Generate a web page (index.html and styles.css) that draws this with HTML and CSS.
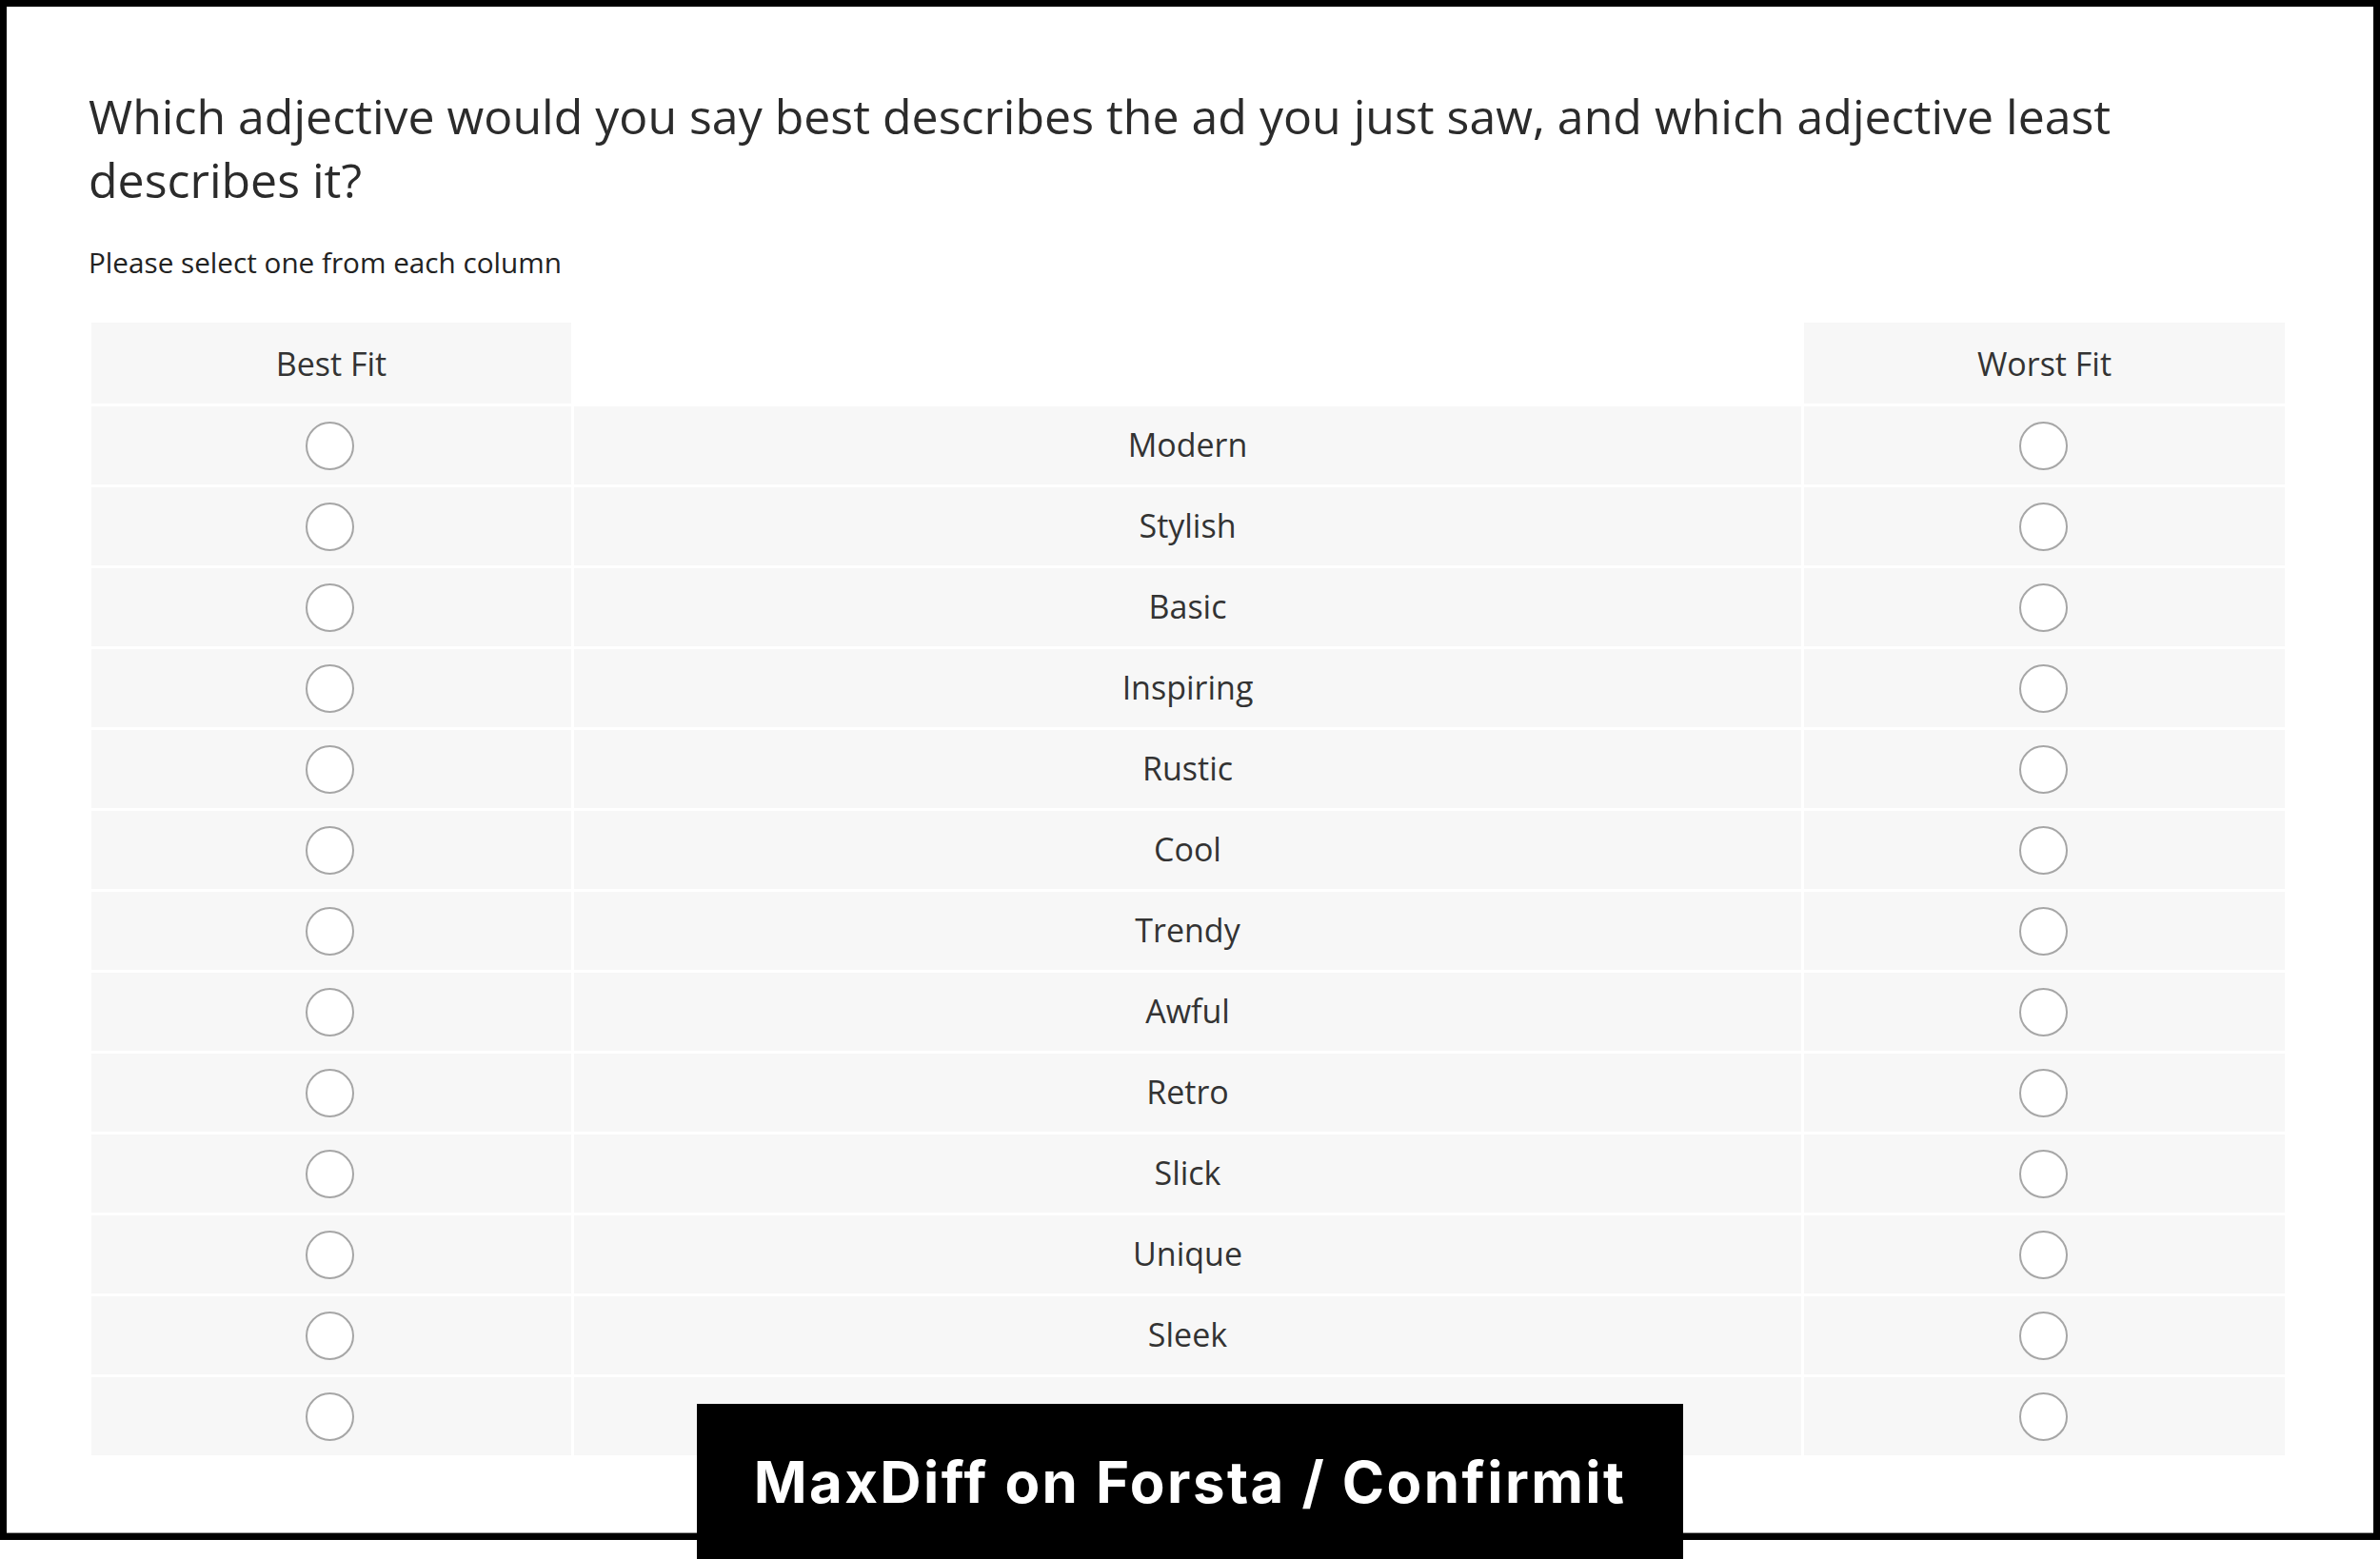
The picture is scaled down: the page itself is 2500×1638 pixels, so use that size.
FILE: index.html
```html
<!DOCTYPE html>
<html lang="en">
<head>
    <meta charset="UTF-8">
    <meta name="viewport" content="width=device-width, initial-scale=1.0">
    <title>MaxDiff on Forsta / Confirmit</title>
    <link rel="stylesheet" href="styles.css">
</head>
<body>

    <!-- Pregunta MaxDiff -->
    <div class="frame">
        <h1 class="question-title">Which adjective would you say best describes the ad you just saw, and which adjective least describes it?</h1>
        <p class="question-hint">Please select one from each column</p>

        <div class="maxdiff">
            <div class="cell head">Best Fit</div>
            <div class="cell head blank"></div>
            <div class="cell head">Worst Fit</div>

            <div class="cell"><input type="radio" name="best" value="1"></div>
            <div class="cell label">Modern</div>
            <div class="cell"><input type="radio" name="worst" value="1"></div>

            <div class="cell"><input type="radio" name="best" value="2"></div>
            <div class="cell label">Stylish</div>
            <div class="cell"><input type="radio" name="worst" value="2"></div>

            <div class="cell"><input type="radio" name="best" value="3"></div>
            <div class="cell label">Basic</div>
            <div class="cell"><input type="radio" name="worst" value="3"></div>

            <div class="cell"><input type="radio" name="best" value="4"></div>
            <div class="cell label">Inspiring</div>
            <div class="cell"><input type="radio" name="worst" value="4"></div>

            <div class="cell"><input type="radio" name="best" value="5"></div>
            <div class="cell label">Rustic</div>
            <div class="cell"><input type="radio" name="worst" value="5"></div>

            <div class="cell"><input type="radio" name="best" value="6"></div>
            <div class="cell label">Cool</div>
            <div class="cell"><input type="radio" name="worst" value="6"></div>

            <div class="cell"><input type="radio" name="best" value="7"></div>
            <div class="cell label">Trendy</div>
            <div class="cell"><input type="radio" name="worst" value="7"></div>

            <div class="cell"><input type="radio" name="best" value="8"></div>
            <div class="cell label">Awful</div>
            <div class="cell"><input type="radio" name="worst" value="8"></div>

            <div class="cell"><input type="radio" name="best" value="9"></div>
            <div class="cell label">Retro</div>
            <div class="cell"><input type="radio" name="worst" value="9"></div>

            <div class="cell"><input type="radio" name="best" value="10"></div>
            <div class="cell label">Slick</div>
            <div class="cell"><input type="radio" name="worst" value="10"></div>

            <div class="cell"><input type="radio" name="best" value="11"></div>
            <div class="cell label">Unique</div>
            <div class="cell"><input type="radio" name="worst" value="11"></div>

            <div class="cell"><input type="radio" name="best" value="12"></div>
            <div class="cell label">Sleek</div>
            <div class="cell"><input type="radio" name="worst" value="12"></div>

            <div class="cell"><input type="radio" name="best" value="13"></div>
            <div class="cell label">Artistic</div>
            <div class="cell"><input type="radio" name="worst" value="13"></div>
        </div>
    </div>

    <!-- Rótulo -->
    <div class="caption">MaxDiff on Forsta / Confirmit</div>

</body>
</html>
```

FILE: styles.css
```css
body {
    margin: 0;
    height: 1638px;
    position: relative;
    font-family: 'Open Sans', sans-serif;
    background-color: #fff;
    color: #333;
}

.frame {
    height: 1618px;
    box-sizing: border-box;
    border: 7px solid #000;
    box-shadow: inset 0 -1px 0 #999;
    padding: 82px 93px 0 86px;
}

.question-title {
    margin: 0;
    font-size: 50px;
    font-weight: 400;
    line-height: 67px;
    color: #2b2b2b;
}

.question-hint {
    margin: 32px 0 0;
    font-size: 29.7px;
    line-height: 41px;
    color: #222;
}

.maxdiff {
    margin: 43px 0 0 3px;
    display: grid;
    grid-template-columns: 504px 1fr 505px;
    gap: 3px;
}

.cell {
    height: 82px;
    display: flex;
    justify-content: center;
    align-items: center;
    background-color: #f7f7f7;
    font-size: 34px;
    color: #333;
}

.label {
    padding-bottom: 2px;
    box-sizing: border-box;
}

.head {
    height: 85px;
}

.blank {
    background-color: transparent;
}

input[type="radio"] {
    appearance: none;
    width: 51px;
    height: 51px;
    margin: 0 3px 0 0;
    box-sizing: border-box;
    border: 2px solid #a6a6a6;
    border-radius: 50%;
    background-color: #fff;
}

.caption {
    position: absolute;
    left: 732px;
    top: 1475px;
    width: 1036px;
    height: 163px;
    display: flex;
    justify-content: center;
    align-items: center;
    background-color: #000;
    color: #fff;
    font-family: 'Inter', sans-serif;
    font-weight: 700;
    font-size: 60px;
    letter-spacing: 2.4px;
}
```
